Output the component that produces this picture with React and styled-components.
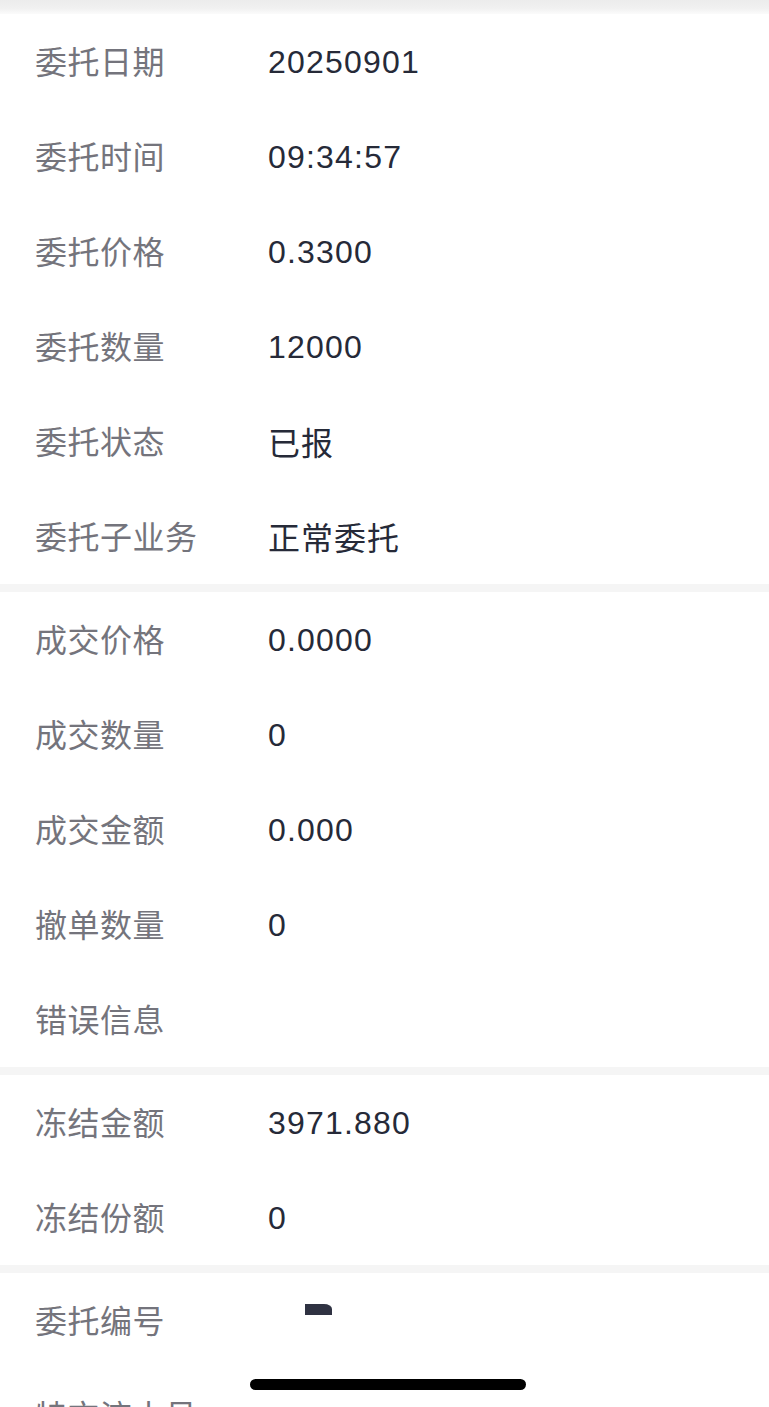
import React from "react";
import styled, {createGlobalStyle} from "styled-components";

const GlobalStyle = createGlobalStyle`
    html, body {
        margin: 0;
        padding: 0;
        background: #ffffff;
    }
    body {
        font-family: "Liberation Sans", "Noto Sans CJK SC", sans-serif;
    }
`;

const Page = styled.div`
    width: 769px;
    height: 1407px;
    overflow: hidden;
    background: #ffffff;
    display: flex;
    flex-direction: column;
`;

const TopShade = styled.div`
    height: 14px;
    flex: none;
    background: linear-gradient(to bottom, #ececec, #f1f1f1 60%, #fbfbfb);
`;

const Gap = styled.div`
    height: 8px;
    flex: none;
    background: #f5f5f5;
`;

const Section = styled.div`
    display: flex;
    flex-direction: column;
`;

const Row = styled.div`
    height: 95px;
    flex: none;
    display: flex;
    align-items: center;
    padding-left: 35px;
`;

const Label = styled.div`
    width: 233px;
    flex: none;
    margin-bottom: 4px;
    font-size: 32px;
    letter-spacing: 0.5px;
    color: #74747c;
    white-space: nowrap;
`;

const Value = styled.div`
    margin-top: ${props => (props.$cjk ? "0" : "2px")};
    margin-bottom: ${props => (props.$cjk ? "2px" : "0")};
    font-size: 32px;
    letter-spacing: ${props => (props.$cjk ? "1px" : "1.2px")};
    color: #262a38;
    white-space: nowrap;
`;

const Masked = styled.div`
    width: 27px;
    height: 11px;
    margin-left: 37px;
    margin-bottom: 22px;
    background: #2f3242;
    border-top-right-radius: 8px 5px;
`;

const HomeBar = styled.div`
    position: fixed;
    left: 250px;
    top: 1379px;
    width: 276px;
    height: 11px;
    border-radius: 6px;
    background: #000000;
`;

const sections = [
    [
        ["委托日期", "20250901"],
        ["委托时间", "09:34:57"],
        ["委托价格", "0.3300"],
        ["委托数量", "12000"],
        ["委托状态", "已报", true],
        ["委托子业务", "正常委托", true]
    ],
    [
        ["成交价格", "0.0000"],
        ["成交数量", "0"],
        ["成交金额", "0.000"],
        ["撤单数量", "0"],
        ["错误信息", ""]
    ],
    [
        ["冻结金额", "3971.880"],
        ["冻结份额", "0"]
    ]
];

export default function App() {
    return (
        <>
            <GlobalStyle />
            <Page>
                <TopShade />
                {sections.map((rows, i) => (
                    <React.Fragment key={i}>
                        {i > 0 && <Gap />}
                        <Section>
                            {rows.map(([label, value, cjk]) => (
                                <Row key={label}>
                                    <Label>{label}</Label>
                                    <Value $cjk={cjk}>{value}</Value>
                                </Row>
                            ))}
                        </Section>
                    </React.Fragment>
                ))}
                <Gap />
                <Section>
                    <Row>
                        <Label>委托编号</Label>
                        <Masked />
                    </Row>
                    <Row>
                        <Label>特交流水号</Label>
                    </Row>
                </Section>
            </Page>
            <HomeBar />
        </>
    );
}
